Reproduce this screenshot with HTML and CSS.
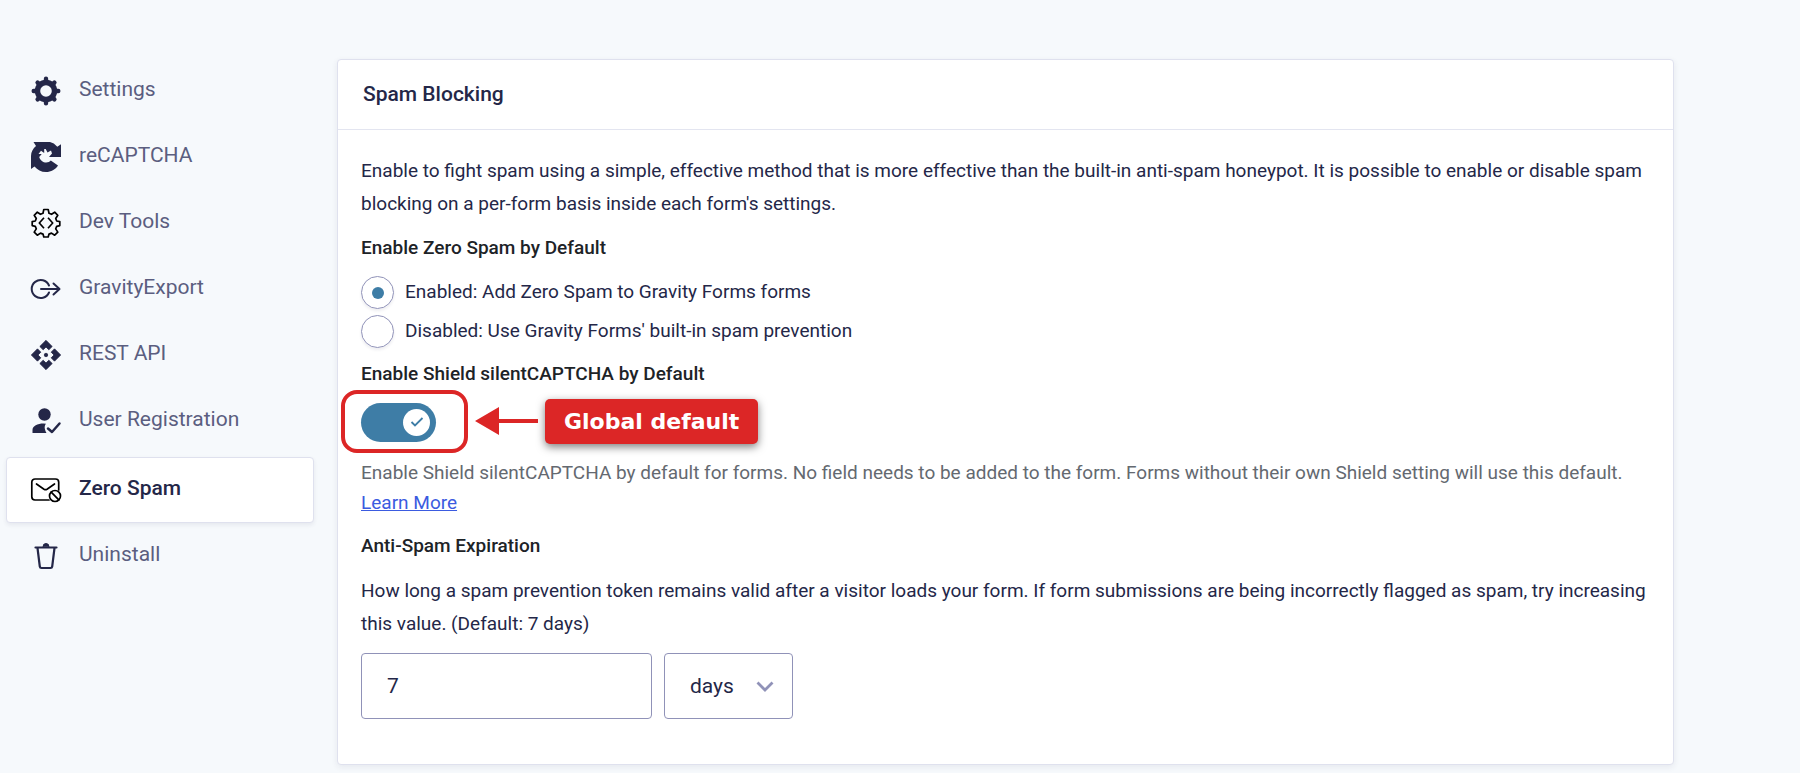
FILE: index.html
```
<!DOCTYPE html>
<html lang="en">
<head>
    <meta charset="UTF-8">
    <meta name="viewport" content="width=device-width, initial-scale=1.0">
    <title>Spam Blocking</title>
    <link rel="stylesheet" href="styles.css">
</head>
<body>
    <div class="page">
        <nav class="sidebar">
            <a class="nav-item" href="#settings">
                <svg class="icon" viewBox="0 0 32 32" fill="none" stroke="#242748" stroke-linecap="round"><circle cx="16" cy="16" r="8.500" stroke-width="5.400"/><path stroke-width="4.400" d="M16 5.500V3.700M16 26.500v1.800M5.500 16H3.700M26.500 16h1.800M8.600 8.600l-1-1M23.400 8.600l1-1M8.600 23.400l-1 1M23.400 23.400l1 1"/></svg>
                <span>Settings</span>
            </a>
            <a class="nav-item" href="#recaptcha">
                <svg class="icon" viewBox="0 0 32 32"><path fill="#242748" d="M3.500 1H20q4 .8 7.300 4.700L31 3.300V16H19l3-3.500-1-3-3.500 2L15.700 8h-1.500v4L11 9.800 8.500 13h3.200L9.200 16c1 3.500 4 5.500 7 5.500 2 0 3.600-.8 4.600-2L28 24.500C25.500 28.500 21 31 16 31c-5 0-8.500-2-11.500-5.500L1 28V15c0-4 2-7.500 5-10Z"/></svg>
                <span>reCAPTCHA</span>
            </a>
            <a class="nav-item" href="#dev-tools">
                <svg class="icon" viewBox="0 0 32 32" fill="none" stroke="#000" stroke-width="1.700" stroke-linejoin="round"><path d="M13.800 2.500h4.400l.8 3.800 2.500 1 3.200-2.100 3.100 3.100-2.100 3.200 1 2.500 3.100.6v4l-3.100.8-1 2.500 2.100 3.200-3.100 3.100-3.200-2.100-2.500 1-.8 2.900h-4.400l-.8-2.900-2.500-1-3.200 2.100-3.100-3.100 2.100-3.200-1-2.500-3.100-.8v-4l3.100-.6 1-2.500-2.100-3.200 3.100-3.100 3.200 2.100 2.500-1Z"/><path d="M14 10.800 9.300 16l4.700 5.200M18 10.800l4.700 5.200-4.700 5.200"/></svg>
                <span>Dev Tools</span>
            </a>
            <a class="nav-item" href="#gravityexport">
                <svg class="icon" viewBox="0 0 32 32" fill="none" stroke="#242748" stroke-width="2" stroke-linecap="round" stroke-linejoin="round"><path d="M19 12.500A9 9 0 1 0 19 19.500M11 16h18M23.500 10.500 29.500 16l-6 5.500"/></svg>
                <span>GravityExport</span>
            </a>
            <a class="nav-item" href="#rest-api">
                <svg class="icon" viewBox="0 0 24 24" fill="#242748" stroke="#242748" stroke-width=".6" stroke-linejoin="round"><circle cx="12" cy="12" r="1.300"/><path d="M12 6l2.120 2.120 2.500-2.500L12 1 7.380 5.620l2.500 2.500L12 6ZM6 12l2.120-2.120-2.500-2.500L1 12l4.620 4.620 2.500-2.500L6 12ZM18 12l-2.120 2.120 2.500 2.500L23 12l-4.620-4.620-2.500 2.500L18 12ZM12 18l-2.120-2.120-2.500 2.500L12 23l4.620-4.620-2.500-2.500L12 18Z"/></svg>
                <span>REST API</span>
            </a>
            <a class="nav-item" href="#user-registration">
                <svg class="icon" viewBox="0 0 32 32"><circle cx="14.500" cy="9.500" r="6.200" fill="#242748"/><path fill="#242748" d="M2.500 28v-3c0-4 5-6.500 11-6.500l2.500.2c-1.800 2-1.800 5 .5 9.300Z"/><path fill="none" stroke="#242748" stroke-width="2.500" stroke-linecap="round" stroke-linejoin="round" d="M18 23.500l4 3.500 7.500-8.500"/></svg>
                <span>User Registration</span>
            </a>
            <a class="nav-item active" href="#zero-spam">
                <svg class="icon" viewBox="0 0 32 32" fill="none" stroke="#000" stroke-width="1.700" stroke-linecap="round" stroke-linejoin="round"><path d="M19 26H5a3.200 3.200 0 0 1-3.200-3.200V8.200A3.200 3.200 0 0 1 5 5h20.500a3.200 3.200 0 0 1 3.200 3.200V16M6.500 10l7.500 5.200q1.500.9 3 0L24.500 10"/><circle cx="25" cy="22" r="5.500"/><path d="M21.200 18.200l7.600 7.600"/></svg>
                <span>Zero Spam</span>
            </a>
            <a class="nav-item" href="#uninstall">
                <svg class="icon" viewBox="0 0 32 32" fill="none" stroke="#242748" stroke-width="2.200" stroke-linecap="round" stroke-linejoin="round"><path d="M5.500 7.500h21M7.500 8l2.300 18.500q.2 1.500 1.700 1.500h9q1.500 0 1.700-1.500L24.500 8"/><path fill="#242748" stroke-width="1" d="M13 6.500q0-3 3-3t3 3Z"/></svg>
                <span>Uninstall</span>
            </a>
        </nav>

        <main class="card">
            <h1 class="card-title">Spam Blocking</h1>
            <form class="card-body">
                <p class="text">Enable to fight spam using a simple, effective method that is more effective than the built-in anti-spam honeypot. It is possible to enable or disable spam blocking on a per-form basis inside each form's settings.</p>

                <h2 class="field-title">Enable Zero Spam by Default</h2>
                <div class="radios">
                    <label class="radio-row"><input class="radio" type="radio" name="zero-spam" checked><span>Enabled: Add Zero Spam to Gravity Forms forms</span></label>
                    <label class="radio-row"><input class="radio" type="radio" name="zero-spam"><span>Disabled: Use Gravity Forms' built-in spam prevention</span></label>
                </div>

                <label class="field-title" for="shield">Enable Shield silentCAPTCHA by Default</label>
                <div class="toggle-row">
                    <div class="toggle">
                        <input class="toggle-input" type="checkbox" id="shield" checked>
                        <svg class="toggle-check" viewBox="0 0 14 14" fill="none" stroke="#3e7da6" stroke-width="1.800"><path d="M1.500 7l3.500 3.500L12.500 3"/></svg>
                        <div class="highlight"></div>
                    </div>
                    <div class="annotation">
                        <svg class="arrow" viewBox="0 0 64 28" fill="#dc2626"><path d="M0 14 24 0v12h39v4H24v12Z"/></svg>
                        <div class="callout">Global default</div>
                    </div>
                </div>
                <p class="hint">Enable Shield silentCAPTCHA by default for forms. No field needs to be added to the form. Forms without their own Shield setting will use this default. <a href="#learn-more">Learn More</a></p>

                <label class="field-title" for="expiration">Anti-Spam Expiration</label>
                <p class="text">How long a spam prevention token remains valid after a visitor loads your form. If form submissions are being incorrectly flagged as spam, try increasing this value. (Default: 7 days)</p>
                <div class="controls">
                    <input class="number" type="text" id="expiration" value="7">
                    <div class="select-wrap">
                        <select class="select" aria-label="Expiration unit">
                            <option>minutes</option>
                            <option>hours</option>
                            <option selected>days</option>
                        </select>
                        <svg class="chevron" viewBox="0 0 18 12" fill="none" stroke="#9092b8" stroke-width="2.800"><path d="M1.500 1.500 9 9l7.500-7.500"/></svg>
                    </div>
                </div>
            </form>
        </main>
    </div>
</body>
</html>
```

FILE: styles.css
```
* {
    box-sizing: border-box;
}

body {
    margin: 0;
    background: #f6f9fc;
    color: #242748;
    font-family: Roboto, sans-serif;
    font-size: 19px;
}

.page {
    display: flex;
    align-items: flex-start;
    gap: 23px;
    padding: 58px 126px 8px 6px;
}

.sidebar {
    flex: 0 0 308px;
}

.nav-item {
    display: flex;
    align-items: center;
    gap: 17px;
    height: 66px;
    padding: 0 23px;
    border: 1px solid transparent;
    border-radius: 4px;
    color: #5b5e80;
    font-size: 21px;
    text-decoration: none;
}

.nav-item span {
    padding-bottom: 4px;
}

.nav-item.active {
    margin-top: 3px;
    background: #fff;
    border-color: #dfe1ee;
    box-shadow: 0 2px 4px rgba(36, 39, 72, 0.08);
    color: #242748;
    font-weight: 500;
}

.icon {
    flex: none;
    width: 32px;
    height: 32px;
}

.card {
    flex: 1;
    margin-top: 1px;
    background: #fff;
    border: 1px solid #dfe1ee;
    border-radius: 4px;
    box-shadow: 0 2px 6px rgba(36, 39, 72, 0.08);
}

.card-title {
    margin: 0;
    padding: 0 25px;
    border-bottom: 1px solid #e3e5f0;
    font-size: 21px;
    font-weight: 500;
    line-height: 69px;
}

.card-body {
    padding: 24px 23px 45px;
}

.text {
    margin: 0 0 16px;
    line-height: 33px;
}

.field-title {
    display: block;
    margin: 14px 0 16px;
    color: #1d2327;
    font-size: 19px;
    font-weight: 500;
    line-height: 24px;
}

.radios {
    display: flex;
    flex-direction: column;
    gap: 6px;
}

.radio-row {
    display: flex;
    align-items: center;
    gap: 11px;
}

.radio-row span {
    padding-bottom: 2px;
}

.radio {
    appearance: none;
    display: grid;
    place-content: center;
    width: 33px;
    height: 33px;
    margin: 0;
    border: 1px solid #9092b8;
    border-radius: 50%;
    box-shadow: 0 2px 3px rgba(36, 39, 72, 0.08);
}

.radio:checked::before {
    content: "";
    width: 12px;
    height: 12px;
    border-radius: 50%;
    background: #3e7da6;
}

.toggle-row {
    display: flex;
    align-items: center;
    height: 39px;
    margin: 17px 0 16px;
}

.toggle {
    position: relative;
    width: 75px;
    height: 39px;
}

.toggle-input {
    appearance: none;
    width: 75px;
    height: 39px;
    margin: 0;
    border-radius: 20px;
    background: #3e7da6;
}

.toggle-input::before {
    content: "";
    display: block;
    width: 27px;
    height: 27px;
    margin: 6px 0 0 42px;
    border-radius: 50%;
    background: #fff;
}

.toggle-check {
    position: absolute;
    top: 12px;
    right: 12px;
    width: 14px;
    height: 14px;
    pointer-events: none;
}

.highlight {
    position: absolute;
    inset: -13px -32px -11px -20px;
    border: 4px solid #dc2626;
    border-radius: 16px;
    pointer-events: none;
}

.annotation {
    display: flex;
    align-items: center;
    gap: 6px;
    margin-left: 39px;
    padding-bottom: 3px;
}

.arrow {
    width: 64px;
    height: 28px;
}

.callout {
    padding: 0 19px;
    border-radius: 5px;
    background: #dc2626;
    box-shadow: 0 3px 8px rgba(0, 0, 0, 0.5);
    color: #fff;
    font-family: "DejaVu Sans", sans-serif;
    font-size: 22px;
    font-weight: 700;
    line-height: 45px;
}

.hint {
    margin: 0 0 16px;
    color: #646970;
    line-height: 30px;
}

.hint a {
    color: #3b5be0;
}

.controls {
    display: flex;
    gap: 12px;
    margin-top: -3px;
}

.number,
.select {
    height: 66px;
    padding: 0 25px;
    border: 1px solid #9092b8;
    border-radius: 4px;
    background: #fff;
    color: #242748;
    font-family: inherit;
    font-size: 21px;
}

.number {
    width: 291px;
}

.select-wrap {
    position: relative;
}

.select {
    appearance: none;
    width: 129px;
}

.chevron {
    position: absolute;
    top: 28px;
    right: 19px;
    width: 18px;
    height: 12px;
    pointer-events: none;
}
```
